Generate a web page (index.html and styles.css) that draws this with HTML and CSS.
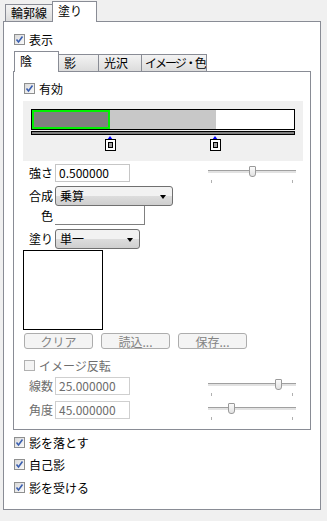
FILE: index.html
```html
<!DOCTYPE html>
<html lang="ja">
<head>
  <meta charset="UTF-8" />
  <title>塗り</title>
  <link rel="stylesheet" href="styles.css">
</head>
<body>
  <div class="tabs outer-tabs">
    <div class="tab w47">輪郭線</div>
    <div class="tab active w44">塗り</div>
  </div>

  <div class="panel">
    <label class="check first"><span class="box on"></span>表示</label>

    <div class="tabs inner-tabs">
      <div class="tab active w44">陰</div>
      <div class="tab w40">影</div>
      <div class="tab w43">光沢</div>
      <div class="tab w65 narrow">イメージ・色</div>
    </div>

    <div class="inner">
      <label class="check enable"><span class="box on"></span>有効</label>

      <div class="grad-area">
        <div class="grad-bar">
          <div class="seg dark"></div>
          <div class="seg light"></div>
        </div>
        <div class="grad-track"></div>
        <div class="marker" style="left: 83px"></div>
        <div class="marker" style="left: 188px"></div>
      </div>

      <div class="row r-strength">
        <span class="lbl">強さ</span>
        <div class="field">0.500000</div>
        <div class="slider"><span class="thumb" style="left: 41px"></span></div>
      </div>

      <div class="row r-blend">
        <span class="lbl">合成</span>
        <div class="select s118">乗算</div>
      </div>

      <div class="row r-color">
        <span class="lbl">色</span>
        <div class="swatch"></div>
      </div>

      <div class="row r-fill">
        <span class="lbl">塗り</span>
        <div class="select s85">単一</div>
      </div>

      <div class="preview"></div>

      <div class="buttons">
        <button disabled>クリア</button>
        <button disabled>読込...</button>
        <button disabled>保存...</button>
      </div>

      <label class="check invert disabled"><span class="box"></span>イメージ反転</label>

      <div class="row r-lines disabled">
        <span class="lbl">線数</span>
        <div class="field">25.000000</div>
        <div class="slider"><span class="thumb" style="left: 67px"></span></div>
      </div>

      <div class="row r-angle disabled">
        <span class="lbl">角度</span>
        <div class="field">45.000000</div>
        <div class="slider"><span class="thumb" style="left: 20px"></span></div>
      </div>
    </div>

    <label class="check b1"><span class="box on"></span>影を落とす</label>
    <label class="check b2"><span class="box on"></span>自己影</label>
    <label class="check b3"><span class="box on"></span>影を受ける</label>
  </div>
</body>
</html>
```

FILE: styles.css
```css
body { margin: 0; background: #f0f0f0; font-family: "Noto Sans CJK JP", "DejaVu Sans", sans-serif; font-size: 12px; color: #000; width: 327px; height: 521px; overflow: hidden; }

/* tabs */
.tabs { display: flex; align-items: flex-end; }
.outer-tabs { height: 21px; padding-left: 5px; }
.inner-tabs { height: 20px; margin: 6px 0 0 1px; }
.tab { box-sizing: border-box; height: 17px; border: 1px solid #898c95; border-bottom: none; background: linear-gradient(#f3f3f3, #dcdcdc); text-align: left; padding-left: 5px; line-height: 15px; margin-right: -1px; white-space: nowrap; overflow: hidden; }
.tab.active { height: 21px; margin-bottom: -1px; background: #fff; position: relative; z-index: 1; line-height: 17px; }
.tab.narrow { letter-spacing: -2px; padding-left: 3px; }
.w47 { width: 48px; }
.w44 { width: 45px; }
.w40 { width: 41px; }
.w43 { width: 44px; }
.w65 { width: 66px; }

/* panels */
.panel { box-sizing: border-box; margin-left: 3px; width: 318px; height: 489px; border: 1px solid #898c95; background: #fff; padding-left: 9px; }
.inner { box-sizing: border-box; width: 298px; height: 359px; border: 1px solid #898c95; background: #fff; padding-left: 9px; }

/* checkboxes */
.check { display: flex; align-items: center; height: 11px; line-height: 11px; margin-left: 1px; }
.box { box-sizing: border-box; width: 11px; height: 11px; border: 1px solid #8e8f8f; background: linear-gradient(135deg, #dcdcdc, #fbfbfb); margin-right: 4px; flex: none; }
.box.on { background: url("data:image/svg+xml,%3Csvg xmlns='http://www.w3.org/2000/svg' width='9' height='9'%3E%3Cpath d='M1.5 4.5 L3.5 7 L7.5 1.5' fill='none' stroke='%233a5fb0' stroke-width='1.6'/%3E%3C/svg%3E") no-repeat center, linear-gradient(135deg, #d8d8d8, #fbfbfb); }
.check.first { margin-top: 12px; }
.check.enable { margin-top: 11px; }
.check.invert { margin-top: 11px; }
.check.b1 { margin-top: 7px; }
.check.b2 { margin-top: 11px; }
.check.b3 { margin-top: 12px; }
.check.disabled { color: #6d6d6d; }
.check.disabled .box { border-color: #b1b1b1; background: #f4f4f4; }

/* gradient editor */
.grad-area { position: relative; margin-top: 7px; width: 280px; height: 60px; background: #f0f0f0; box-sizing: border-box; padding: 8px 8px 0; }
.grad-bar { box-sizing: border-box; height: 21px; border: 1px solid #000; background: #fff; display: flex; }
.seg { height: 100%; box-sizing: border-box; }
.seg.dark { width: 78px; background: #808080; border: 2px solid #00f000; }
.seg.light { width: 106px; background: #c8c8c8; }
.grad-track { box-sizing: border-box; height: 4px; margin-top: 1px; border: 1px solid #000; background: #808080; }
.marker { position: absolute; top: 35px; width: 9px; height: 15px; }
.marker::before { content: ""; position: absolute; left: 1px; top: 0; border-left: 3.5px solid transparent; border-right: 3.5px solid transparent; border-bottom: 4px solid #0000ff; }
.marker::after { content: ""; position: absolute; left: 0; top: 4px; width: 5px; height: 6px; border: 2px solid #fff; outline: 1px solid #000; background: #a0a0a0; box-shadow: inset 0 0 0 1px #000; }

/* form rows */
.row { display: flex; align-items: center; width: 280px; }
.lbl { width: 30px; text-align: right; margin-right: 2px; line-height: 14px; }
.field { box-sizing: border-box; width: 75px; height: 18px; border: 1px solid #c6c6c6; padding-left: 3px; line-height: 16px; color: #000; }
.r-strength { margin-top: 3px; height: 18px; }
.r-blend { margin-top: 4px; height: 19px; }
.r-color { margin-top: 1px; height: 19px; }
.r-fill { margin-top: 4px; height: 19px; }
.r-lines { margin-top: 6px; height: 18px; }
.r-angle { margin-top: 6px; height: 18px; }
.row.disabled .lbl { color: #6d6d6d; }
.row.disabled .field { color: #6d6d6d; border-color: #cfcfcf; }

.select { box-sizing: border-box; height: 20px; border: 1px solid #707070; border-radius: 3px; background: linear-gradient(#f2f2f2 50%, #dddddd 50%, #cfcfcf); padding-left: 4px; line-height: 18px; position: relative; }
.select::after { content: ""; position: absolute; right: 6px; top: 8px; border-left: 3.5px solid transparent; border-right: 3.5px solid transparent; border-top: 4px solid #000; }
.s118 { width: 118px; }
.s85 { width: 85px; }
.swatch { box-sizing: border-box; width: 90px; height: 19px; border-right: 1px solid #808080; border-bottom: 1px solid #808080; }

.slider { position: relative; margin-left: auto; margin-right: 7px; width: 88px; height: 18px; }
.slider::before { content: ""; position: absolute; left: 0; right: 0; top: 6px; height: 2px; border-top: 1px solid #a0a0a0; background: #e2e2e2; }
.slider::after { content: ""; position: absolute; left: 3px; right: 3px; top: 16px; height: 3px; border-left: 1px solid #b0b0b0; border-right: 1px solid #b0b0b0; }
.thumb { position: absolute; top: 2px; box-sizing: border-box; width: 7px; height: 11px; border: 1px solid #9a9a9a; border-radius: 1px 1px 3px 3px; background: linear-gradient(#fafafa, #e2e2e2); z-index: 1; }

.preview { box-sizing: border-box; margin-top: 2px; width: 80px; height: 80px; border: 1px solid #000; background: #fff; }

.buttons { display: flex; gap: 8px; margin: 3px 0 0 1px; }
.buttons button { box-sizing: border-box; width: 69px; height: 16px; padding: 0; border: 1px solid #adadad; border-radius: 3px; background: #f4f4f4; color: #838383; font: inherit; line-height: 13px; }
```
